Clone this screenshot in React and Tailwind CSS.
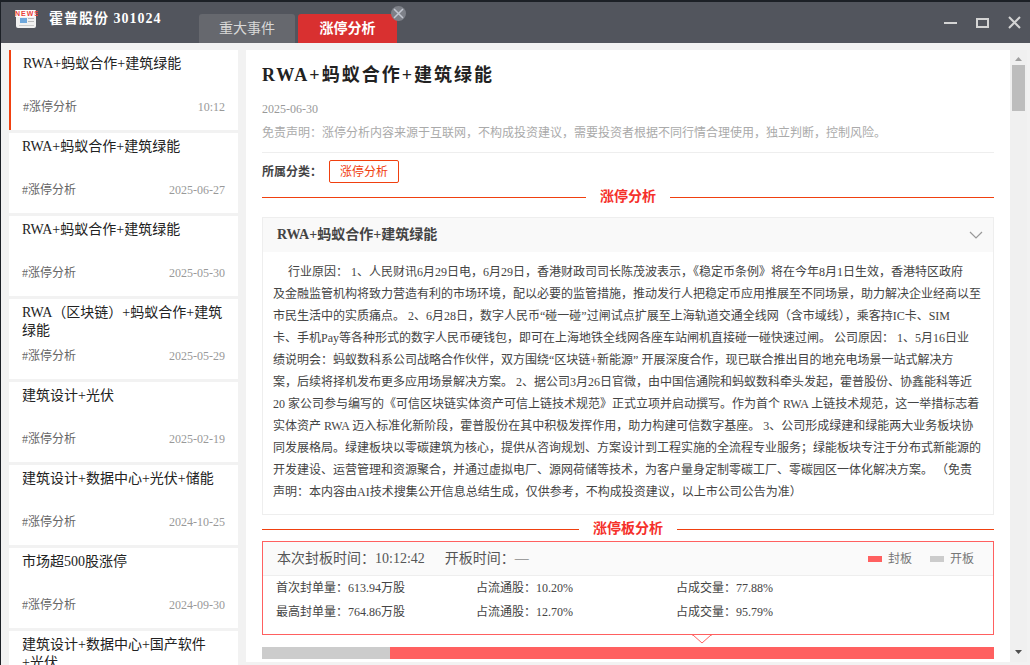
const lines = [
  "行业原因： 1、人民财讯6月29日电，6月29日，香港财政司司长陈茂波表示，《稳定币条例》将在今年8月1日生效，香港特区政府",
  "及金融监管机构将致力营造有利的市场环境，配以必要的监管措施，推动发行人把稳定币应用推展至不同场景，助力解决企业经商以至",
  "市民生活中的实质痛点。 2、6月28日，数字人民币“碰一碰”过闸试点扩展至上海轨道交通全线网（含市域线），乘客持IC卡、SIM",
  "卡、手机Pay等各种形式的数字人民币硬钱包，即可在上海地铁全线网各座车站闸机直接碰一碰快速过闸。 公司原因： 1、5月16日业",
  "绩说明会：蚂蚁数科系公司战略合作伙伴，双方围绕“区块链+新能源” 开展深度合作，现已联合推出目的地充电场景一站式解决方",
  "案，后续将择机发布更多应用场景解决方案。 2、据公司3月26日官微，由中国信通院和蚂蚁数科牵头发起，霍普股份、协鑫能科等近",
  "20 家公司参与编写的《可信区块链实体资产可信上链技术规范》正式立项并启动撰写。作为首个 RWA 上链技术规范，这一举措标志着",
  "实体资产 RWA 迈入标准化新阶段，霍普股份在其中积极发挥作用，助力构建可信数字基座。 3、公司形成绿建和绿能两大业务板块协",
  "同发展格局。绿建板块以零碳建筑为核心，提供从咨询规划、方案设计到工程实施的全流程专业服务；绿能板块专注于分布式新能源的",
  "开发建设、运营管理和资源聚合，并通过虚拟电厂、源网荷储等技术，为客户量身定制零碳工厂、零碳园区一体化解决方案。 （免责",
  "声明：本内容由AI技术搜集公开信息总结生成，仅供参考，不构成投资建议，以上市公司公告为准）",
];

const items = [
  { title: "RWA+蚂蚁合作+建筑绿能", time: "10:12", active: true },
  { title: "RWA+蚂蚁合作+建筑绿能", time: "2025-06-27" },
  { title: "RWA+蚂蚁合作+建筑绿能", time: "2025-05-30" },
  { title: "RWA（区块链）+蚂蚁合作+建筑绿能", time: "2025-05-29" },
  { title: "建筑设计+光伏", time: "2025-02-19" },
  { title: "建筑设计+数据中心+光伏+储能", time: "2024-10-25" },
  { title: "市场超500股涨停", time: "2024-09-30" },
  { title: "建筑设计+数据中心+国产软件+光伏", time: "" },
];

const SectionTitle = ({ children, className }) => (
  <div className={`flex items-center gap-[14px] ${className}`}>
    <div className="h-px flex-1 bg-[#f0400f]" />
    <span className="text-sm font-bold leading-5 text-[#f5302a]">{children}</span>
    <div className="h-px flex-1 bg-[#f0400f]" />
  </div>
);

const NewsIcon = () => (
  <svg width="24" height="22" viewBox="0 0 24 22" className="shrink-0">
    <path d="M2 4h20v14a2 2 0 0 1-2 2H4a2 2 0 0 1-2-2z" fill="#f1f1f1" />
    <rect x="1" y="2" width="21" height="7" rx="1" fill="#fdfdfd" />
    <rect x="6" y="10" width="7" height="5" fill="#6fa8dc" />
    <rect x="14" y="10" width="6" height="1" fill="#bbb" />
    <rect x="14" y="13" width="6" height="1" fill="#bbb" />
    <rect x="5" y="17" width="15" height="1" fill="#ccc" />
    <text x="1" y="7.5" fontSize="7" fontWeight="700" fill="#e8413a" fontFamily="Liberation Sans, sans-serif">NEWS</text>
  </svg>
);

export default function App() {
  return (
    <div className="h-[665px] w-[1030px] overflow-hidden bg-[#1c2026] pl-px pt-[2px] font-['Liberation_Serif','Noto_Sans_CJK_SC',sans-serif]">
      <header className="relative flex h-[41px] items-end bg-[#52555d]">
        <div className="mb-[8px] ml-[13px] flex w-[185px] items-center gap-[11px] self-center pt-px text-sm font-bold tracking-[1px] text-white">
          <NewsIcon />
          <span className="whitespace-pre">霍普股份 301024</span>
        </div>
        <div className="flex h-[29px] w-[96px] items-center justify-center rounded-t-[3px] bg-[#66686e] text-sm text-[#d8d8d8]">重大事件</div>
        <div className="ml-[3px] flex h-[29px] w-[99px] items-center justify-center rounded-t-[3px] bg-[#d93030] text-sm font-bold text-white">涨停分析</div>
        <div className="absolute left-[390px] top-[4px] flex h-[15px] w-[15px] items-center justify-center rounded-full bg-[#7d8088]">
          <svg width="11" height="11" viewBox="0 0 11 11" stroke="#c2c6d0" strokeWidth="1.5"><path d="M1 1l9 9M10 1l-9 9" /></svg>
        </div>
        <div className="ml-auto mr-[9px] flex items-center gap-[19px] self-center">
          <div className="flex h-[13px] w-[13px] items-center"><div className="h-[2px] w-[13px] bg-[#d4d4d4]" /></div>
          <div className="h-[10px] w-[13px] border-2 border-[#d4d4d4]" />
          <svg width="13" height="13" viewBox="0 0 13 13" stroke="#d4d4d4" strokeWidth="2"><path d="M1 1l11 11M12 1L1 12" /></svg>
        </div>
      </header>

      <div className="flex h-[622px] bg-[#f2f2f2] pt-[7px]">
        <aside className="ml-[8px] flex w-[229px] flex-col gap-[3px] overflow-hidden">
          {items.map((it, i) => (
            <div
              key={i}
              className={`flex h-[80px] shrink-0 flex-col bg-white pr-[13px] ${it.active ? "border-l-2 border-[#f0400f] pl-[12px]" : "pl-[13px]"}`}
            >
              <div className="h-[44px] pt-[5px] text-sm leading-[18px] text-[#222]">{it.title}</div>
              <div className="flex items-center justify-between pt-[5px] text-xs leading-[16px] text-[#666]">
                <span>#涨停分析</span>
                <span className="text-[#999]">{it.time}</span>
              </div>
            </div>
          ))}
        </aside>

        <main className="ml-[8px] h-[612px] w-[764px] overflow-hidden bg-white px-[16px]">
          <h1 className="pt-[13px] text-lg font-bold leading-6 tracking-[2px] text-[#222]">RWA+蚂蚁合作+建筑绿能</h1>
          <div className="mt-[14px] text-xs leading-4 text-[#999]">2025-06-30</div>
          <div className="mt-[8px] border-b border-[#eeeeee] pb-[11px] text-xs leading-4 text-[#aaa]">
            免责声明：涨停分析内容来源于互联网，不构成投资建议，需要投资者根据不同行情合理使用，独立判断，控制风险。
          </div>
          <div className="mt-[7px] flex items-center gap-[7px]">
            <span className="text-xs font-bold text-[#444]">所属分类：</span>
            <span className="flex h-[23px] w-[70px] items-center justify-center rounded-[2px] border border-[#f0400f] text-xs text-[#f0400f]">涨停分析</span>
          </div>
          <SectionTitle className="mt-[4px]">涨停分析</SectionTitle>

          <section className="mt-[10px] h-[298px] border border-[#eeeeee]">
            <div className="flex h-[34px] items-center justify-between bg-[#f9f9f9] pl-[14px] pr-[10px]">
              <span className="text-sm font-bold text-[#444]">RWA+蚂蚁合作+建筑绿能</span>
              <svg width="14" height="8" viewBox="0 0 14 8" fill="none" stroke="#999" strokeWidth="1.2"><path d="M1 1l6 6 6-6" /></svg>
            </div>
            <div className="pl-[10px] pt-[9px] text-xs leading-[22px] text-[#444]">
              {lines.map((l, i) => (
                <div key={i} className={`whitespace-pre ${i === 0 ? "pl-[15px]" : ""}`}>{l}</div>
              ))}
            </div>
          </section>

          <SectionTitle className="mt-[4px]">涨停板分析</SectionTitle>

          <section className="relative mt-[2px] h-[94px] border border-[#ff6060]">
            <div className="flex h-[34px] items-center justify-between border-b border-[#eeeeee] bg-[#fafafa] pl-[14px] pr-[19px]">
              <div className="flex gap-[20px] whitespace-pre text-sm text-[#555]">
                <span>本次封板时间：10:12:42</span>
                <span>开板时间：—</span>
              </div>
              <div className="flex items-center text-xs text-[#777]">
                <span className="h-[6px] w-[14px] bg-[#ff6060]" />
                <span className="ml-[6px]">封板</span>
                <span className="ml-[18px] h-[6px] w-[14px] bg-[#cccccc]" />
                <span className="ml-[6px]">开板</span>
              </div>
            </div>
            <div className="grid grid-cols-[200px_200px_200px] gap-y-[8px] pl-[13px] pt-[4px] text-xs leading-4 text-[#444]">
              <span>首次封单量：613.94万股</span>
              <span>占流通股：10.20%</span>
              <span>占成交量：77.88%</span>
              <span>最高封单量：764.86万股</span>
              <span>占流通股：12.70%</span>
              <span>占成交量：95.79%</span>
            </div>
            <svg width="20" height="10" viewBox="0 0 20 10" className="absolute left-[429px] top-[92px]">
              <path d="M0 1h1l9 8 9-8h1" fill="#fff" stroke="#ff6060" />
            </svg>
          </section>

          <div className="mt-[12px] flex h-[12px]">
            <div className="w-[128px] bg-[#cccccc]" />
            <div className="flex-1 bg-[#ff6060]" />
          </div>
        </main>

        <div className="flex h-[612px] w-[17px] flex-col items-center bg-[#f0f0f0]">
          <svg width="7" height="4" viewBox="0 0 7 4" className="mt-[7px]"><path d="M3.5 0L7 4H0z" fill="#a0a0a0" /></svg>
          <div className="mt-[4px] h-[46px] w-[13px] bg-[#bdbdbd]" />
          <svg width="7" height="4" viewBox="0 0 7 4" className="mt-auto mb-[8px]"><path d="M0 0h7L3.5 4z" fill="#505050" /></svg>
        </div>
      </div>
    </div>
  );
}
